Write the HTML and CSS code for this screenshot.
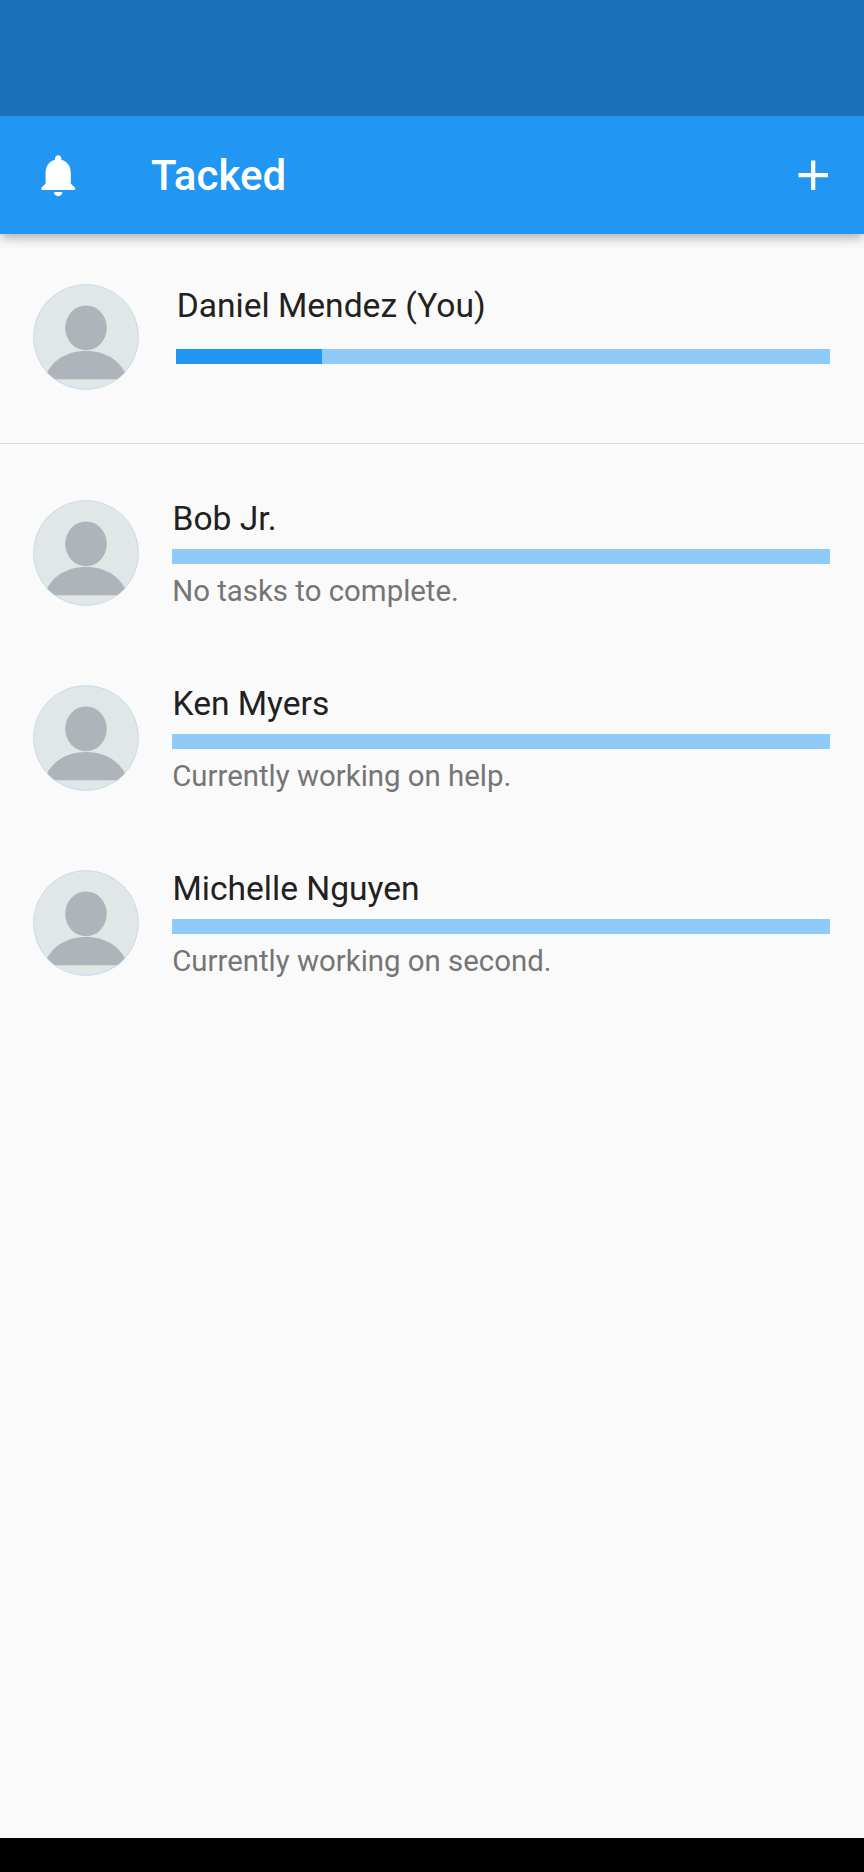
FILE: index.html
```html
<!DOCTYPE html>
<html lang="en">
<head>
<meta charset="utf-8">
<title>Tacked</title>
<link rel="stylesheet" href="styles.css">
</head>
<body>
<svg class="defs" aria-hidden="true">
  <symbol id="person" viewBox="0 0 106 106">
    <clipPath id="disc"><circle cx="53" cy="53" r="52.7"/></clipPath>
    <circle cx="53" cy="53" r="52.6" fill="#e1e6e7"/>
    <g clip-path="url(#disc)" fill="#aeb4b9">
      <ellipse cx="53" cy="43.8" rx="20.8" ry="22.4"/>
      <path d="M11 95.3C17 77 33 67 53 67s36 10 42 28.300z"/>
    </g>
    <circle cx="53" cy="53" r="52.5" fill="none" stroke="#b4d2ee" stroke-width=".6"/>
  </symbol>
</svg>
<div class="status-bar"></div>
<header class="app-bar">
  <svg class="icon" viewBox="0 0 24 24"><path d="M12 22c1.100 0 2-.9 2-2h-4c0 1.100.89 2 2 2zm6-6v-5c0-3.070-1.640-5.640-4.500-6.320V4c0-.83-.67-1.500-1.500-1.500s-1.500.67-1.500 1.500v.68C7.630 5.360 6 7.920 6 11v5l-2 2v1h16v-1l-2-2z"/></svg>
  <h1 class="title">Tacked</h1>
  <svg class="icon" viewBox="0 0 24 24"><path d="M19 13h-6v6h-2v-6H5v-2h6V5h2v6h6v2z"/></svg>
</header>
<main class="content">
  <section class="me">
    <svg class="avatar"><use href="#person"/></svg>
    <div class="details">
      <div class="name">Daniel Mendez (You)</div>
      <div class="bar"><div class="fill" style="width:22.3%"></div></div>
    </div>
  </section>
  <ul class="people">
    <li class="person">
      <svg class="avatar"><use href="#person"/></svg>
      <div class="details">
        <div class="name">Bob Jr.</div>
        <div class="bar"></div>
        <div class="task">No tasks to complete.</div>
      </div>
    </li>
    <li class="person">
      <svg class="avatar"><use href="#person"/></svg>
      <div class="details">
        <div class="name">Ken Myers</div>
        <div class="bar"></div>
        <div class="task">Currently working on help.</div>
      </div>
    </li>
    <li class="person">
      <svg class="avatar"><use href="#person"/></svg>
      <div class="details">
        <div class="name">Michelle Nguyen</div>
        <div class="bar"></div>
        <div class="task">Currently working on second.</div>
      </div>
    </li>
  </ul>
</main>
<footer class="nav-bar"></footer>
</body>
</html>
```

FILE: styles.css
```css
* { box-sizing: border-box; }
body {
  margin: 0;
  height: 1872px;
  display: flex;
  flex-direction: column;
  background: #fafafa;
  font-family: Roboto, sans-serif;
  color: #212121;
}
.defs { position: absolute; width: 0; height: 0; }
.status-bar { position: relative; z-index: 1; height: 116px; background: #1b70b7; }
.app-bar {
  height: 117.6px;
  padding: 0 25.2px 0 33.4px;
  display: flex;
  align-items: center;
  background: #2196f3;
  color: #fff;
  box-shadow: 0 4px 8px -2px rgba(0,0,0,.16), 0 6px 10px rgba(0,0,0,.11), 0 2px 16px rgba(0,0,0,.08);
}
.icon { width: 50.4px; height: 50.4px; fill: currentColor; }
.title {
  flex: 1;
  margin: 3px 0 0 67.2px;
  font-size: 42px;
  line-height: 50px;
  font-weight: 500;
}
.content { flex: 1; }
.me {
  display: flex;
  height: 210.4px;
  padding: 50.2px 33.6px 0 33.2px;
  gap: 37.2px;
  border-bottom: 1px solid #dcdcdc;
}
.avatar { width: 106px; height: 106px; flex: none; }
.details { flex: 1; }
.name { font-size: 33.6px; line-height: 40px; padding-left: .3px; }
.me .details { padding-top: 2.6px; }
.me .bar { margin-top: 22.5px; }
.bar { height: 15px; background: #90caf9; }
.fill { height: 100%; background: #2196f3; }
.people { list-style: none; margin: 0; padding: 56px 33.6px 0 33.2px; }
.person { display: flex; height: 184.8px; gap: 33px; }
.person .name { margin-top: -1px; }
.person .bar { margin-top: 10px; }
.task { margin-top: 9.500px; font-size: 29.4px; line-height: 36px; color: #757575; }
.nav-bar { height: 34px; background: #000; }
```
